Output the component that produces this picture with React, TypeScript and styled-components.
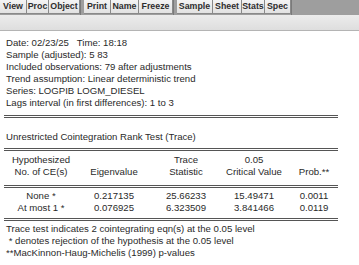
import styled, { createGlobalStyle } from 'styled-components';

const Global = createGlobalStyle`
  html, body { margin: 0; padding: 0; background: #fff; }
  body { font-family: "Liberation Sans", Arial, sans-serif; color: #2a2a2a; }
`;

const Window = styled.div`
  width: 359px;
  height: 265px;
  overflow: hidden;
  background: #fff;
`;

const Toolbar = styled.div`
  display: flex;
  height: 15px;
  background: #9e9e9e;
`;

const Group = styled.div`
  display: flex;
  margin-right: 3px;
  border-right: 1px solid #7a7a7a;
`;

const ToolButton = styled.div<{ $w: number }>`
  width: ${({ $w }) => $w}px;
  height: 14px;
  box-sizing: border-box;
  border-right: 1px solid #8a8a8a;
  border-bottom: 1px solid #8a8a8a;
  background: linear-gradient(#f4f4f4, #e2e2e2);
  font-size: 8.8px;
  font-weight: bold;
  line-height: 13px;
  text-align: center;
  color: #2e2e2e;
`;

const Band = styled.div`
  height: 15px;
  background: linear-gradient(#ececec, #dedede);
  border-bottom: 1px solid #b4b4b4;
`;

const Content = styled.div`
  padding: 6px 0 0 4px;
  font-size: 9.6px;
  line-height: 12px;
`;

const Line = styled.div`
  padding-left: 2px;
  white-space: pre;
`;

const DoubleRule = styled.div<{ $top: number; $bottom: number }>`
  width: 334px;
  height: 1px;
  border-top: 1px solid #555;
  border-bottom: 1px solid #555;
  margin: ${({ $top, $bottom }) => `${$top}px 0 ${$bottom}px`};
`;

const Row = styled.div`
  display: grid;
  grid-template-columns: 74px 72px 72px 64px 56px;
  width: 338px;
  text-align: center;
`;

const Cell = styled.div`
  white-space: pre;
`;

const toolGroups: [string, number][][] = [
  [['View', 27], ['Proc', 22], ['Object', 31]],
  [['Print', 27], ['Name', 28], ['Freeze', 34]],
  [['Sample', 36], ['Sheet', 29], ['Stats', 23], ['Spec', 26]],
];

const header = [
  'Date: 02/23/25   Time: 18:18',
  'Sample (adjusted): 5 83',
  'Included observations: 79 after adjustments',
  'Trend assumption: Linear deterministic trend',
  'Series: LOGPIB LOGM_DIESEL ',
  'Lags interval (in first differences): 1 to 3',
];

const rows = [
  ['None *', '0.217135', '25.66233', '15.49471', '0.0011'],
  ['At most 1 *', '0.076925', '6.323509', '3.841466', '0.0119'],
];

const notes = [
  'Trace test indicates 2 cointegrating eqn(s) at the 0.05 level',
  ' * denotes rejection of the hypothesis at the 0.05 level',
  '**MacKinnon-Haug-Michelis (1999) p-values',
];

export default function App() {
  return (
    <Window>
      <Global />
      <Toolbar>
        {toolGroups.map((g, i) => (
          <Group key={i}>
            {g.map(([label, w]) => (
              <ToolButton key={label} $w={w}>
                {label}
              </ToolButton>
            ))}
          </Group>
        ))}
      </Toolbar>
      <Band />
      <Content>
        {header.map((t) => (
          <Line key={t}>{t}</Line>
        ))}
        <DoubleRule $top={6} $bottom={13} />
        <Line>Unrestricted Cointegration Rank Test (Trace)</Line>
        <DoubleRule $top={5} $bottom={3} />
        <Row>
          <Cell>Hypothesized</Cell>
          <Cell></Cell>
          <Cell>Trace</Cell>
          <Cell>0.05</Cell>
          <Cell></Cell>
        </Row>
        <Row>
          <Cell>No. of CE(s)</Cell>
          <Cell>Eigenvalue</Cell>
          <Cell>Statistic</Cell>
          <Cell>Critical Value</Cell>
          <Cell>Prob.**</Cell>
        </Row>
        <DoubleRule $top={7} $bottom={2} />
        {rows.map((r) => (
          <Row key={r[0]}>
            {r.map((c, i) => (
              <Cell key={i}>{c}</Cell>
            ))}
          </Row>
        ))}
        <DoubleRule $top={4} $bottom={2} />
        {notes.map((t) => (
          <Line key={t}>{t}</Line>
        ))}
      </Content>
    </Window>
  );
}
